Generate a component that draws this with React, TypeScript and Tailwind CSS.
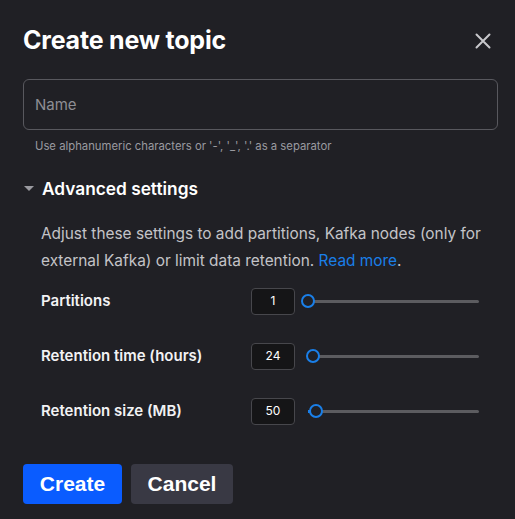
import { useState } from "react";

const rows = [
  { label: "Partitions", value: 1, thumb: 308, fill: false },
  { label: "Retention time (hours)", value: 24, thumb: 313, fill: false },
  { label: "Retention size (MB)", value: 50, thumb: 316, fill: true },
];

// slider box starts at page x=301; thumb is the centre in page coords
function Slider({ thumb, fill }: { thumb: number; fill: boolean }) {
  const c = thumb - 301;
  return (
    <div className="relative h-[14px] w-[178px]">
      <div className="absolute top-[5.5px] left-[7px] right-0 h-[3px] bg-[#5c5c60] rounded-full" />
      {fill && <div className="absolute top-[5.5px] left-[7px] h-[3px] bg-[#1a7fe8]" style={{ width: c - 7 }} />}
      <div
        className="absolute top-0 h-[14px] w-[14px] rounded-full border-[2.5px] border-[#1a7fe8] bg-[#202025]"
        style={{ left: c - 7 }}
      />
    </div>
  );
}

export default function App() {
  const [name, setName] = useState("");
  const [open] = useState(true);

  return (
    <div className="w-[515px] h-[519px] bg-[#202025] text-white" style={{ fontFamily: "Inter, 'Noto Sans', sans-serif" }}>
      <div className="px-[23px] pt-[24px]">
        {/* Header */}
        <div className="flex items-center justify-between h-[34px]">
          <h1 className="text-[25px] font-bold tracking-[-0.2px] text-white">Create new topic</h1>
          <button className="mr-[1px] text-[#c8c8cc]" aria-label="Close">
            <svg width="16" height="16" viewBox="0 0 16 16" fill="none" stroke="currentColor" strokeWidth="2" strokeLinecap="round">
              <path d="M1.5 1.5l13 13M14.5 1.5l-13 13" />
            </svg>
          </button>
        </div>

        {/* Name */}
        <input
          value={name}
          onChange={(e) => setName(e.target.value)}
          placeholder="Name"
          className="mt-[21px] block w-[475px] h-[51px] px-[11px] rounded-[6px] border border-[#58585e] bg-transparent text-[15px] text-white placeholder:text-[#8e8e94] focus:outline-none"
        />
        <p className="mt-[8px] pl-[12px] text-[11.3px] text-[#9a9aa0]">Use alphanumeric characters or '-', '_', '.' as a separator</p>

        {/* Advanced settings */}
        <div className="mt-[22px] flex items-center h-[24px]">
          <svg width="10" height="6" viewBox="0 0 10 6" className="ml-[1px] mr-[8px] text-[#9a9aa0]">
            <path d="M0 0h10L5 5z" fill="currentColor" />
          </svg>
          <span className="text-[17.3px] font-semibold">Advanced settings</span>
        </div>

        {open && (
          <div className="pl-[18px]">
            <p className="mt-[19px] text-[15.4px] leading-[27px] text-[#c4c4c8]">
              Adjust these settings to add partitions, Kafka nodes (only for external Kafka) or limit data retention.{" "}
              <a className="text-[#1a7fe8]">Read more</a>.
            </p>

            <div className="mt-[14px] flex flex-col gap-[28px]">
              {rows.map((r) => (
                <div key={r.label} className="flex items-center h-[27px]">
                  <span className="w-[210px] text-[15px] font-semibold text-[#f2f2f4]">{r.label}</span>
                  <div className="w-[44px] h-[27px] flex items-center justify-center rounded-[4px] border border-[#47474c] bg-[#151517] text-[12px]">
                    {r.value}
                  </div>
                  <div className="ml-[6px]">
                    <Slider thumb={r.thumb} fill={r.fill} />
                  </div>
                </div>
              ))}
            </div>
          </div>
        )}

        {/* Actions */}
        <div className="mt-[39px] flex gap-[9px]" style={{ fontFamily: "'Liberation Sans', Arial, sans-serif" }}>
          <button className="w-[99px] h-[40px] rounded-[4px] bg-[#0a5cff] text-[21px] font-bold text-white">Create</button>
          <button className="w-[102px] h-[40px] rounded-[4px] bg-[#393944] text-[21px] font-bold text-white">Cancel</button>
        </div>
      </div>
    </div>
  );
}
